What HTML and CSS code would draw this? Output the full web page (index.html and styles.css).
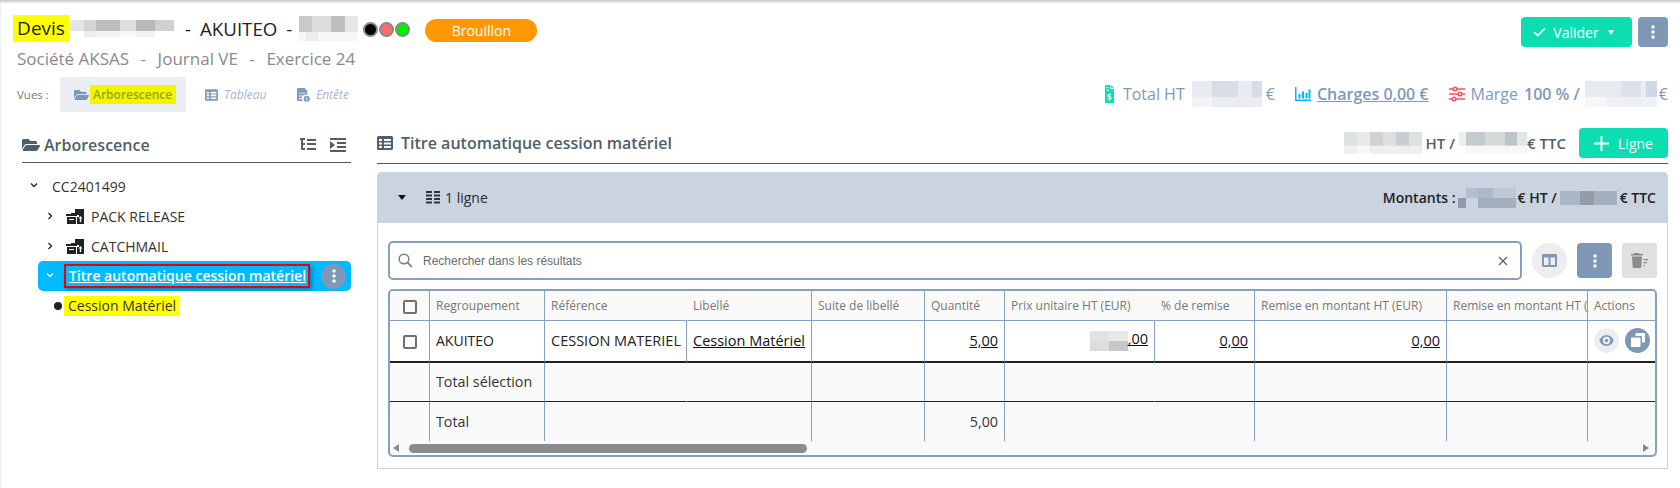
FILE: index.html
```html
<!DOCTYPE html>
<html lang="fr">
<head>
<meta charset="utf-8">
<title>Devis</title>
<link rel="stylesheet" href="styles.css">
</head>
<body>
<svg class="defs" aria-hidden="true">
  <symbol id="i-folder" viewBox="0 0 576 512"><path d="M572.694 292.093L500.27 416.248A63.997 63.997 0 0 1 444.989 448H45.025c-18.523 0-30.064-20.093-20.731-36.093l72.424-124.155A64 64 0 0 1 152 256h399.964c18.523 0 30.064 20.093 20.73 36.093zM152 224h328v-48c0-26.51-21.49-48-48-48H272l-64-64H48C21.49 64 0 85.49 0 112v278.046l69.077-118.418C86.214 242.25 117.989 224 152 224z"/></symbol>
  <symbol id="i-table" viewBox="0 0 16 14"><path fill-rule="evenodd" d="M1.5 0h13A1.5 1.5 0 0 1 16 1.5v11a1.5 1.5 0 0 1-1.500 1.500h-13A1.500 1.500 0 0 1 0 12.500v-11A1.500 1.500 0 0 1 1.500 0zM2 3v2h3V3zM7 3v2h7V3zM2 6.500v2h3v-2zM7 6.500v2h7v-2zM2 10v2h3v-2zM7 10v2h7v-2z"/></symbol>
  <symbol id="i-dots" viewBox="0 0 4 14"><circle cx="2" cy="2" r="1.700"/><circle cx="2" cy="7" r="1.700"/><circle cx="2" cy="12" r="1.700"/></symbol>
  <symbol id="i-box" viewBox="0 0 18 15"><path d="M9 0h9v15h-7V8h2V6H5V4h4z"/><path d="M0 5h11v2H0z"/><path fill-rule="evenodd" d="M1 8h9v7H1zM3 10v1h5v-1z"/><path fill="#fff" d="M14.500 7l2 2.500h-1.300V13h-1.400V9.500h-1.300z"/></symbol>
</svg>
<div class="topbar"></div>
<div class="page">
  <header class="head">
    <div class="title-row">
      <mark class="mark-title">Devis</mark>
      <span class="blur blur-title1"></span>
      <span class="title-text dash1">-</span>
      <span class="title-text akuiteo">AKUITEO</span>
      <span class="title-text dash2">-</span>
      <span class="blur blur-title2"></span>
      <span class="dots">
        <span class="dot dot-black"></span>
        <span class="dot dot-red"></span>
        <span class="dot dot-green"></span>
      </span>
      <span class="pill">Brouillon</span>
    </div>
    <div class="actions">
      <button class="btn btn-teal btn-valider">
        <svg class="i-check" viewBox="0 0 14 11"><path d="M1 5.500l4 4 8-8" fill="none" stroke="#fff" stroke-width="1.800"/></svg>
        <span>Valider</span>
        <span class="caret-small"></span>
      </button>
      <button class="btn btn-more"><svg class="i-dots"><use href="#i-dots"/></svg></button>
    </div>
  </header>
  <div class="subtitle">
    <span>Société AKSAS</span><span class="sep">-</span><span>Journal VE</span><span class="sep">-</span><span>Exercice 24</span>
  </div>
  <div class="views-row">
    <div class="views">
      <span class="views-label">Vues :</span>
      <a class="tab tab-active">
        <svg class="i-tab i-tab-wide"><use href="#i-folder"/></svg>
        <mark class="mark-tab">Arborescence</mark>
      </a>
      <a class="tab tab-table">
        <svg class="i-tab"><use href="#i-table"/></svg>
        <span>Tableau</span>
      </a>
      <a class="tab tab-entete">
        <svg class="i-tab" viewBox="0 0 14 15"><path d="M1 0h7l3 3v4.500A4 4 0 0 0 6.500 14H1a1 1 0 0 1-1-1V1a1 1 0 0 1 1-1zM2 5v1h7V5zM2 8v1h4V8zM2 11v1h3v-1z" fill-rule="evenodd"/><circle cx="10.500" cy="11.500" r="3.300"/><path d="M10 9.500h1v1h-1zM10 11h1v2.500h-1z" fill="#fff"/></svg>
        <span>Entête</span>
      </a>
    </div>
    <div class="totals">
      <svg class="i-doc" viewBox="0 0 9 18"><path fill-rule="evenodd" d="M1 0h4.500v4H9v13a1 1 0 0 1-1 1H1a1 1 0 0 1-1-1V1a1 1 0 0 1 1-1zM1.500 2v1H4V2zM1.500 4.500v1H4v-1zM4 8v1.100c-1 .2-1.600.8-1.600 1.600 0 1 .8 1.400 1.600 1.700.8.200 1.100.400 1.100.700 0 .400-.4.600-.9.600-.5 0-1-.2-1.400-.5l-.5.900c.4.300 1 .5 1.700.6V16h1v-1.200c1-.2 1.600-.9 1.600-1.700 0-1-.7-1.500-1.700-1.800-.7-.2-1-.4-1-.6 0-.3.300-.5.800-.5.400 0 .9.100 1.200.3l.4-.9c-.4-.2-.8-.4-1.300-.4V8zM6.200 0L9 2.800H6.200z"/></svg>
      <span class="stat stat-total">Total HT</span>
      <span class="blur blur-total"></span>
      <span class="stat stat-euro">€</span>
      <svg class="i-chart" viewBox="0 0 16 14"><path d="M0 0h1.500v12.500H16V14H0z"/><path d="M3.500 7h2v4.500h-2zM7 4.500h2v7H7zM10.500 6h2v5.500h-2zM13.500 2.500h2v9h-2z"/></svg>
      <a class="stat stat-charges">Charges 0,00 €</a>
      <svg class="i-sliders" viewBox="0 0 16 16"><g fill="none" stroke="#ff5160" stroke-width="1.600"><path d="M0 3h16M0 8h16M0 13h16"/><circle cx="6" cy="3" r="1.800" fill="#fff"/><circle cx="11" cy="8" r="1.800" fill="#fff"/><circle cx="5" cy="13" r="1.800" fill="#fff"/></g></svg>
      <span class="stat stat-marge">Marge</span>
      <strong class="stat stat-pct">100 % /</strong>
      <span class="blur blur-marge"></span>
      <span class="stat stat-euro2">€</span>
    </div>
  </div>

  <main class="main">
    <aside class="tree">
      <div class="tree-head">
        <h2 class="h-tree"><svg class="i-folder-h"><use href="#i-folder"/></svg>Arborescence</h2>
        <div class="tree-tools">
          <svg class="i-tool" viewBox="0 0 16 14"><path d="M0 0h5v2H3v3h2v2H3v3h2v2H2a1 1 0 0 1-1-1V2H0zM7 1h9v2H7zM7 5h9v2H7zM7 10h9v2H7z"/></svg>
          <svg class="i-tool" viewBox="0 0 16 14"><path d="M0 0h16v2H0zM7 4h9v2H7zM7 8h9v2H7zM0 12h16v2H0zM0 3l5 4-5 4z"/></svg>
        </div>
      </div>
      <ul class="tree-list">
        <li class="node node-root"><svg class="chev"><path d="M1 1.500l3 3 3-3"/></svg><span>CC2401499</span></li>
        <li class="node node-child"><svg class="chev"><path d="M2.500 1l3 3-3 3"/></svg><svg class="i-box"><use href="#i-box"/></svg><span>PACK RELEASE</span></li>
        <li class="node node-child"><svg class="chev"><path d="M2.500 1l3 3-3 3"/></svg><svg class="i-box"><use href="#i-box"/></svg><span>CATCHMAIL</span></li>
        <li class="node node-selected">
          <svg class="chev chev-white"><path d="M1 1.500l3 3 3-3"/></svg>
          <a class="selected-label">Titre automatique cession matériel</a>
          <span class="circle-more"><svg class="i-dots"><use href="#i-dots"/></svg></span>
        </li>
        <li class="node node-leaf"><span class="bullet"></span><mark class="mark-leaf">Cession Matériel</mark></li>
      </ul>
    </aside>

    <section class="content">
      <div class="content-head">
        <h2 class="h-content"><svg class="i-table-h"><use href="#i-table"/></svg>Titre automatique cession matériel</h2>
        <div class="content-amount">
          <span class="blur blur-ht"></span>
          <span class="txt-ht">HT /</span>
          <span class="blur blur-ttc"></span>
          <span>€ TTC</span>
          <button class="btn btn-teal btn-ligne">
            <svg class="i-plus" viewBox="0 0 15 15"><path d="M7.500 0v15M0 7.500h15" stroke="#fff" stroke-width="2"/></svg>
            <span>Ligne</span>
          </button>
        </div>
      </div>
      <div class="panel">
        <div class="panel-head">
          <div class="panel-left">
            <span class="caret-down"></span>
            <svg class="i-lines" viewBox="0 0 14 13"><path d="M0 0h6v2H0zM8 0h6v2H8zM0 3.500h6v2H0zM8 3.500h6v2H8zM0 7h6v2H0zM8 7h6v2H8zM0 10.500h6v2H0zM8 10.500h6v2H8z"/></svg>
            <span>1 ligne</span>
          </div>
          <div class="panel-right">
            <span class="lbl-mont">Montants :</span>
            <span class="blur blur-m1"></span>
            <span class="lbl-ht">€ HT /</span>
            <span class="blur blur-m2"></span>
            <span class="lbl-ttc">€ TTC</span>
          </div>
        </div>
        <div class="panel-body">
          <div class="toolbar">
            <div class="search">
              <svg class="i-search" viewBox="0 0 15 15"><circle cx="6" cy="6" r="4.800" fill="none" stroke="#6f7f8c" stroke-width="1.500"/><path d="M9.500 9.500l4.500 4.500" stroke="#6f7f8c" stroke-width="1.700"/></svg>
              <span class="search-text">Rechercher dans les résultats</span>
              <svg class="i-x" viewBox="0 0 10 10"><path d="M1 1l8 8M9 1l-8 8" stroke="#55626e" stroke-width="1.300"/></svg>
            </div>
            <button class="tool-circle"><svg class="i-cols" viewBox="0 0 15 13"><path fill-rule="evenodd" d="M1 0h13a1 1 0 0 1 1 1v11a1 1 0 0 1-1 1H1a1 1 0 0 1-1-1V1a1 1 0 0 1 1-1zM2 3.500V11h4.500V3.500zM8.500 3.500V11H13V3.500z"/></svg></button>
            <button class="btn tool-more"><svg class="i-dots"><use href="#i-dots"/></svg></button>
            <button class="btn tool-trash"><svg class="i-trash" viewBox="0 0 17 15"><path d="M3 0h5l.5 1H12v1.500H0V1h2.500zM1 3.500h10l-.7 10.500a1 1 0 0 1-1 1H2.700a1 1 0 0 1-1-1zM12.500 6H17v1.300h-4.500zM12.500 9H16v1.300h-3.500zM12.500 12H14v1.300h-1.500z"/></svg></button>
          </div>
          <div class="grid-wrap">
            <table class="grid">
              <colgroup>
                <col class="c1"><col class="c2"><col class="c3"><col class="c4"><col class="c5"><col class="c6"><col class="c7"><col class="c8"><col class="c9"><col class="c10"><col class="c11">
              </colgroup>
              <thead>
                <tr>
                  <th class="center"><span class="check"></span></th>
                  <th>Regroupement</th>
                  <th class="no-line">Référence</th>
                  <th>Libellé</th>
                  <th>Suite de libellé</th>
                  <th>Quantité</th>
                  <th class="no-line">Prix unitaire HT (EUR)</th>
                  <th>% de remise</th>
                  <th>Remise en montant HT (EUR)</th>
                  <th class="clipped">Remise en montant HT (</th>
                  <th class="last">Actions</th>
                </tr>
              </thead>
              <tbody>
                <tr class="row-data">
                  <td class="center"><span class="check"></span></td>
                  <td>AKUITEO</td>
                  <td class="tight">CESSION MATERIEL</td>
                  <td><a class="link">Cession Matériel</a></td>
                  <td></td>
                  <td class="num"><a class="link">5,00</a></td>
                  <td class="num"><span class="blur blur-price"></span><a class="link">,00</a></td>
                  <td class="num"><a class="link">0,00</a></td>
                  <td class="num"><a class="link">0,00</a></td>
                  <td></td>
                  <td class="last cell-actions">
                    <span class="act act-eye"><svg viewBox="0 0 16 12"><path fill-rule="evenodd" d="M8 0c3.500 0 6.500 2.300 8 6-1.500 3.700-4.500 6-8 6s-6.500-2.300-8-6c1.500-3.700 4.500-6 8-6zm0 2a4 4 0 1 0 0 8 4 4 0 0 0 0-8zm0 2a2 2 0 1 1 0 4 2 2 0 0 1 0-4z"/></svg></span>
                    <span class="act act-copy"><svg viewBox="0 0 14 14"><path d="M5.500 0H13a1 1 0 0 1 1 1v7.500a1 1 0 0 1-1 1h-2V4a1 1 0 0 0-1-1H4.500V1a1 1 0 0 1 1-1z"/><rect y="4.500" width="9.500" height="9.500" rx="1"/></svg></span>
                  </td>
                </tr>
                <tr class="row-total row-sel">
                  <td></td><td>Total sélection</td><td class="no-line"></td><td></td><td></td><td></td><td class="no-line"></td><td></td><td></td><td></td><td class="last"></td>
                </tr>
                <tr class="row-total">
                  <td></td><td>Total</td><td class="no-line"></td><td></td><td></td><td class="num">5,00</td><td class="no-line"></td><td></td><td></td><td></td><td class="last"></td>
                </tr>
              </tbody>
            </table>
            <div class="hscroll">
              <span class="arrow-left"></span>
              <span class="thumb"></span>
              <span class="arrow-right"></span>
            </div>
          </div>
        </div>
      </div>
    </section>
  </main>
</div>
</body>
</html>
```
FILE: styles.css
```css
* { box-sizing: border-box; }
html, body { margin: 0; padding: 0; }
body {
  width: 1680px;
  height: 488px;
  overflow: hidden;
  background: #fff;
  font-family: "Open Sans", sans-serif;
  color: #333;
}
.defs { display: none; }
mark { color: inherit; background: #ffff00; }
button { font-family: inherit; border: 0; padding: 0; margin: 0; }
h2 { margin: 0; }
ul { list-style: none; margin: 0; padding: 0; }

.topbar {
  height: 4px;
  background: linear-gradient(#c4c4c4, #f4f4f4 80%, #fff);
}
.page {
  height: 484px;
  padding: 0 12px 0 13px;
  border-left: 1px solid #f0f0f0;
}

/* blurred mosaics */
.blur {
  display: inline-block;
  flex: none;
  background-repeat: no-repeat;
  background-size: 100% 62%, 100% 40%;
  background-position: top, bottom;
}
.blur-title1 {
  width: 104px; height: 18px; margin-left: 1px;
  background-image:
    linear-gradient(90deg, #e4e4e4 0 13%, #d4d4d4 13% 25%, #bdbdbd 25% 48%, #dedede 48% 63%, #b8b8b8 63% 82%, #d0d0d0 82% 100%),
    linear-gradient(90deg, #fff 0 13%, #eee 13% 25%, #f3f3f3 25% 48%, #f8f8f8 48% 63%, #f2f2f2 63% 82%, #fff 82% 100%);
}
.blur-title2 {
  width: 59px; height: 26px; margin-left: 7px;
  background-image:
    linear-gradient(90deg, #c9c9c9 0 22%, #dcdcdc 22% 55%, #bebebe 55% 78%, #e6e6e6 78% 100%),
    linear-gradient(90deg, #f6f6f6 0 12%, #ececec 12% 32%, #f7f7f7 32% 100%);
}
.blur-total {
  width: 70px; height: 26px; margin-left: 7px;
  background-image:
    linear-gradient(90deg, #e8ecf2 0 28%, #d6dde7 28% 65%, #e8ecf2 65% 85%, #d6dde7 85% 100%),
    linear-gradient(90deg, #f1f4f7 0 28%, #e9edf2 28% 100%);
}
.blur-marge {
  width: 72px; height: 26px; margin-left: 5px;
  background-image:
    linear-gradient(90deg, #e6ebf1 0 50%, #dce2ea 50% 78%, #e8edf2 78% 85%, #cfd7e2 85% 100%),
    linear-gradient(90deg, #f5f7f9 0 30%, #edf0f4 30% 100%);
}
.blur-ht {
  width: 78px; height: 22px;
  background-image:
    linear-gradient(90deg, #dfe2e3 0 17%, #e8eaea 17% 33%, #cfd2d1 33% 50%, #dde0e2 50% 67%, #c9ced0 67% 83%, #dfe2e3 83% 100%),
    linear-gradient(90deg, #eeefef 0 17%, #f6f7f7 17% 33%, #eeefef 33% 100%);
}
.blur-ttc {
  width: 68px; height: 22px;
  background-image:
    linear-gradient(90deg, #edefef 0 10%, #c4cbcd 10% 38%, #d6d9d9 38% 67%, #bcc4c8 67% 85%, #e3e6e6 85% 100%),
    linear-gradient(90deg, #fff 0 10%, #f6f7f7 10% 100%);
}
.blur-m1 {
  width: 58px; height: 20px;
  background-size: 100% 50%, 100% 50%;
  background-image:
    linear-gradient(90deg, #c9d4e0 0 14%, #b3bfcc 14% 35%, #abb8c6 35% 60%, #bcc8d4 60% 100%),
    linear-gradient(90deg, #8e9aa7 0 14%, #c9d4e0 14% 35%, #a2aebb 35% 100%);
}
.blur-m2 {
  width: 57px; height: 14px;
  background-size: 100% 100%, 100% 0;
  background-image:
    linear-gradient(90deg, #aab6c3 0 35%, #929da9 35% 60%, #a4b0bd 60% 100%),
    linear-gradient(#aab6c3, #aab6c3);
}
.blur-price {
  width: 38px; height: 20px; vertical-align: middle;
  background-size: 100% 50%, 100% 50%;
  background-image:
    linear-gradient(90deg, #e2e2e2 0 50%, #e8e8e8 50% 100%),
    linear-gradient(90deg, #dcdcdc 0 50%, #c6c6c6 50% 100%);
}

/* header */
.head {
  display: flex;
  justify-content: space-between;
  height: 30px;
  padding-top: 11px;
  margin-bottom: 0;
  align-items: flex-start;
  box-sizing: content-box;
}
.title-row {
  display: flex;
  align-items: center;
  height: 27px;
  font-size: 19px;
  color: #222;
}
.mark-title {
  height: 27px;
  width: 56px;
  margin-left: -1px;
  text-align: center;
  font-size: 19px;
  line-height: 27px;
}
.dash1 { margin-left: 11px; }
.akuiteo { margin-left: 9px; }
.dash2 { margin-left: 9px; }
.title-text { font-size: 18.700px; line-height: 27px; }
.dots { display: flex; margin-left: 5px; gap: 1px; margin-top: 1px; }
.dot {
  width: 15px; height: 15px;
  border-radius: 50%;
  border: 2px solid #888;
}
.dot-black { background: #000; }
.dot-red { background: #ff6b6b; }
.dot-green { background: #00f000; }
.pill {
  margin-left: 15px;
  margin-top: 3px;
  width: 112px;
  height: 23px;
  border-radius: 12px;
  background: #ff9800;
  color: #fff;
  font-size: 14px;
  line-height: 23px;
  text-align: center;
}
.actions { display: flex; gap: 6px; padding-top: 2px; }
.btn { display: flex; align-items: center; justify-content: center; border-radius: 4px; }
.btn-teal { background: #0cdeb1; color: #fff; }
.btn-valider { width: 111px; height: 30px; font-size: 14px; gap: 7px; padding-right: 6px; }
.i-check { width: 13px; height: 10px; }
.caret-small {
  width: 0; height: 0; margin-left: 2px;
  border: 3px solid transparent;
  border-top: 5px solid #fff;
  border-bottom: 0;
}
.btn-more { width: 30px; height: 30px; background: #7f98b7; }
.i-dots { width: 4px; height: 14px; fill: #fff; }

.subtitle {
  padding-left: 3px;
  height: 26px;
  margin-top: 1px;
  font-size: 17px;
  line-height: 26px;
  color: #8a8a8a;
}
.sep { margin: 0 11.500px; }

.views-row {
  display: flex;
  justify-content: space-between;
  align-items: flex-start;
  height: 51px;
  margin-top: 5px;
}
.views { display: flex; align-items: center; height: 35px; padding-left: 3px; }
.views-label { width: 43px; font-size: 11.500px; color: #777; }
.tab {
  display: flex;
  align-items: center;
  font-size: 12px;
  font-style: italic;
  color: #a5b6cd;
}
.tab-active {
  width: 126px;
  height: 35px;
  padding-left: 14px;
  background: #ebeff4;
}
.mark-tab {
  margin-left: 1px;
  padding: 0 4px 0 3px;
  height: 19px;
  line-height: 19px;
  font-style: normal;
  font-weight: 600;
  color: #98a600;
  background: #f1f500;
}
.tab-table { margin-left: 19px; width: 73px; }
.tab-entete { margin-left: 19px; }
.i-tab { width: 13px; height: 14px; fill: #7f98b7; margin-right: 6px; flex: none; }
.i-tab-wide { width: 15px; margin-right: 0; }

.totals {
  display: flex;
  align-items: center;
  height: 26px;
  margin-top: 4px;
  font-size: 16px;
  color: #8098b8;
}
.stat { white-space: nowrap; }
.i-doc { width: 9px; height: 18px; fill: #0cdeb1; }
.stat-total { margin-left: 9px; }
.stat-euro { margin-left: 4px; }
.i-chart { width: 16px; height: 14px; fill: #00baff; margin-left: 20px; }
.stat-charges { margin-left: 6px; font-weight: 600; text-decoration: underline; }
.i-sliders { width: 16px; height: 16px; margin-left: 20px; }
.stat-marge { margin-left: 6px; }
.stat-pct { margin-left: 6px; font-weight: 600; }
.stat-euro2 { margin-left: 2px; }

/* layout */
.main { display: flex; align-items: flex-start; gap: 26px; padding-left: 8px; }
.tree { width: 329px; flex: none; }
.content { flex: 1; min-width: 0; }

/* tree */
.tree-head {
  display: flex;
  justify-content: space-between;
  align-items: center;
  height: 35px;
  border-bottom: 1px solid #4d5f6b;
}
.h-tree {
  display: flex;
  align-items: center;
  gap: 4px;
  font-size: 16px;
  font-weight: 600;
  color: #4f5f6b;
}
.i-folder-h { width: 18px; height: 16px; fill: #4f5f6b; }
.tree-tools { display: flex; gap: 14px; padding-right: 5px; }
.i-tool { width: 16px; height: 14px; fill: #4f5f6b; }
.tree-list { padding-top: 8px; font-size: 14px; }
.node { display: flex; align-items: center; height: 30px; color: #333; }
.chev { width: 8px; height: 8px; flex: none; fill: none; stroke: #222; stroke-width: 1.300; }
.node-root { padding-left: 8px; height: 30px; }
.node-root span { margin-left: 14px; }
.node-child { padding-left: 24px; }
.i-box { width: 18px; height: 15px; margin: 0 7px 0 12px; fill: #222; flex: none; }
.node-selected {
  height: 30px;
  margin: 0 0 0 16px;
  padding-left: 8px;
  background: #00baff;
  border-radius: 5px;
  position: relative;
}
.chev-white { stroke: #fff; }
.selected-label {
  margin-left: 10px;
  width: 246px;
  height: 24px;
  line-height: 19px;
  padding-left: 3px;
  border: 2px solid #e8000b;
  box-shadow: 2px 2px 4px rgba(0, 60, 110, 0.45);
  color: #fff;
  font-weight: 600;
  font-size: 14px;
  text-decoration: underline;
  white-space: nowrap;
}
.circle-more {
  display: flex;
  align-items: center;
  justify-content: center;
  width: 25px;
  height: 25px;
  margin-left: 11px;
  border-radius: 50%;
  background: #7f98b7;
}
.node-leaf { padding-left: 32px; height: 30px; }
.bullet { width: 8px; height: 8px; border-radius: 50%; background: #222; margin-right: 2px; }
.mark-leaf { height: 20px; line-height: 20px; padding: 0 4px; }

/* content */
.content-head {
  display: flex;
  justify-content: space-between;
  align-items: center;
  height: 36px;
  padding-bottom: 5px;
  border-bottom: 1px solid #4d5f6b;
}
.h-content {
  display: flex;
  align-items: center;
  gap: 8px;
  font-size: 16px;
  font-weight: 600;
  color: #4f5f6b;
}
.i-table-h { width: 16px; height: 14px; fill: #4f5f6b; }
.content-amount {
  display: flex;
  align-items: center;
  font-size: 15px;
  font-weight: 600;
  color: #4f5f6b;
}
.txt-ht { margin: 0 4px; }
.btn-ligne {
  width: 89px;
  height: 30px;
  margin-left: 13px;
  gap: 9px;
  font-size: 14px;
  font-weight: 400;
}
.i-plus { width: 15px; height: 15px; }

.panel {
  margin-top: 8px;
  border: 1px solid #d0d0d0;
  border-top: 0;
  border-radius: 5px 5px 0 0;
  height: 297px;
}
.panel-head {
  display: flex;
  justify-content: space-between;
  align-items: center;
  height: 51px;
  margin: 0 -1px;
  padding: 0 12px 0 21px;
  background: #c9d4e0;
  border-radius: 5px 5px 0 0;
  font-size: 14px;
  color: #2a2a2a;
}
.panel-left { display: flex; align-items: center; }
.caret-down {
  width: 0; height: 0;
  border: 4.500px solid transparent;
  border-top: 5px solid #111;
  border-bottom: 0;
}
.i-lines { width: 14px; height: 13px; fill: #333; margin: 0 5px 0 20px; }
.panel-right { display: flex; align-items: center; font-size: 14px; font-weight: 600; color: #222; }
.lbl-mont { margin-right: 3px; }
.lbl-ht { margin: 0 3px 0 1px; }
.lbl-ttc { margin-left: 3px; }
.panel-body { padding: 18px 10px 0; }
.toolbar { display: flex; align-items: center; height: 39px; }
.search {
  display: flex;
  align-items: center;
  width: 1134px;
  height: 39px;
  padding: 0 12px 0 8px;
  border: 2px solid #86a0bf;
  border-radius: 5px;
}
.i-search { width: 15px; height: 15px; flex: none; }
.search-text {
  flex: 1;
  margin-left: 10px;
  font-family: "Liberation Sans", Arial, sans-serif;
  font-size: 12px;
  color: #6a6a6a;
}
.i-x { width: 10px; height: 10px; }
.tool-circle {
  display: flex;
  align-items: center;
  justify-content: center;
  width: 35px;
  height: 35px;
  margin-left: 10px;
  border-radius: 50%;
  background: #eee;
}
.i-cols { width: 15px; height: 13px; fill: #7f98b7; }
.tool-more { width: 35px; height: 35px; margin-left: 10px; background: #7f98b7; }
.tool-trash { width: 35px; height: 35px; margin-left: 10px; background: #e0e0e0; border-radius: 3px; }
.i-trash { width: 17px; height: 15px; fill: #8c8c8c; }

/* data table */
.grid-wrap {
  margin-top: 9px;
  width: 1269px;
  height: 168px;
  border: 2px solid #86a0bf;
  border-radius: 5px;
  overflow: hidden;
  background: #fafafa;
}
.grid {
  table-layout: fixed;
  width: 1265px;
  border-collapse: separate;
  border-spacing: 0;
  font-size: 14px;
  color: #222;
}
.c1 { width: 40px; } .c2 { width: 115px; } .c3 { width: 142px; } .c4 { width: 125px; }
.c5 { width: 113px; } .c6 { width: 80px; } .c7 { width: 150px; } .c8 { width: 100px; }
.c9 { width: 192px; } .c10 { width: 141px; } .c11 { width: 67px; }
.grid th, .grid td {
  padding: 0 6px;
  border-right: 1px solid #86a0bf;
  white-space: nowrap;
  overflow: hidden;
  text-align: left;
}
.grid th {
  height: 30px;
  border-bottom: 1px solid #86a0bf;
  font-size: 12px;
  font-weight: 400;
  color: #777;
  background: #fafafa;
}
.grid .no-line { border-right-color: transparent; }
.grid .last { border-right: 0; }
.grid .center { text-align: center; padding: 0; }
.grid .num { text-align: right; }
.grid .clipped { padding-right: 0; }
.grid .tight { padding: 0 4px 2px 6px; font-size: 14.500px; }
.grid .row-data td { height: 42px; padding-bottom: 2px; background: #fff; border-bottom: 2px solid #222; }
.row-total td { height: 39px; background: #fafafa; color: #333; font-size: 14.300px; }
.grid .row-sel td { padding-bottom: 2px; border-bottom: 1px solid #222; }
.link { color: #111; text-decoration: underline; font-size: 14.500px; }
.check {
  display: inline-block;
  width: 14px;
  height: 14px;
  border: 2px solid #707070;
  border-radius: 2px;
  vertical-align: middle;
}
.grid .cell-actions { padding: 0 0 2px; font-size: 0; }
.act {
  display: inline-flex;
  align-items: center;
  justify-content: center;
  width: 25px;
  height: 25px;
  border-radius: 50%;
  vertical-align: middle;
}
.act-eye { margin-left: 6px; background: #eee; }
.act-eye svg { width: 15px; height: 11px; fill: #7f98b7; }
.act-copy { margin-left: 6px; background: #7f98b7; }
.act-copy svg { width: 14px; height: 14px; fill: #fff; }

.hscroll { display: flex; align-items: center; height: 14px; padding: 0 6px 0 3px; }
.arrow-left {
  width: 0; height: 0;
  border: 4.500px solid transparent;
  border-right: 6px solid #8c8c8c;
  border-left: 0;
}
.thumb {
  width: 398px;
  height: 9px;
  margin-left: 10px;
  border-radius: 5px;
  background: #8c8c8c;
}
.arrow-right {
  width: 0; height: 0;
  margin-left: auto;
  border: 4.500px solid transparent;
  border-left: 6px solid #8c8c8c;
  border-right: 0;
}
```
